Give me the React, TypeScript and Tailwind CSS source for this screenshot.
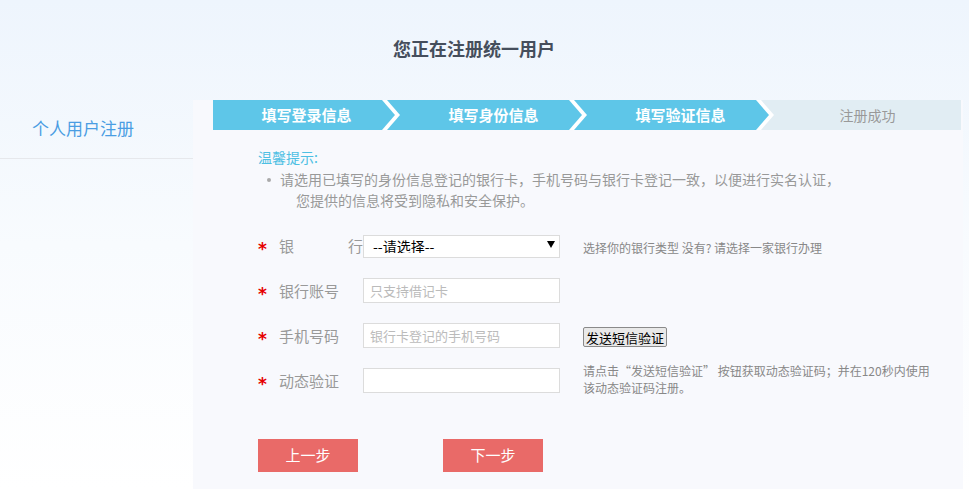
import React from "react";

const FONT = { fontFamily: '"Noto Sans CJK SC", "Noto Sans", sans-serif' };

const steps = [
  { label: "填写登录信息", active: true },
  { label: "填写身份信息", active: true },
  { label: "填写验证信息", active: true },
  { label: "注册成功", active: false },
];

const BLUE = "#5ec6e8";
const GRAY = "#e1edf3";

function Chevron({ cur, next }: { cur: string; next: string }) {
  return (
    <svg
      className="absolute right-0 top-0"
      width="18"
      height="30"
      viewBox="0 0 18 30"
    >
      <rect x="0" y="0" width="18" height="30" fill={next} />
      <polygon points="0,0 5,0 18,15 5,30 0,30" fill="#ffffff" />
      <polygon points="0,0 13,15 0,30" fill={cur} />
    </svg>
  );
}

function Star() {
  return (
    <span
      className="w-[21px] text-[17px] font-bold text-[#e60000] leading-none translate-y-[4px] inline-block"
      style={{ fontFamily: '"DejaVu Sans", sans-serif' }}
    >
      *
    </span>
  );
}

function Row({
  label,
  children,
  hint,
}: {
  label: React.ReactNode;
  children: React.ReactNode;
  hint?: React.ReactNode;
}) {
  return (
    <div className="flex items-center h-[45px]">
      <Star />
      <div className="w-[84px] text-[15px] text-[#999] leading-none">{label}</div>
      <div className="w-[197px] flex items-center">{children}</div>
      <div className="ml-[23px]">{hint}</div>
    </div>
  );
}

export default function App() {
  return (
    <div
      className="w-[969px] h-[489px] overflow-hidden bg-gradient-to-b from-[#eef5fd] via-[#f8fbfe] to-[#ffffff]"
      style={FONT}
    >
      <div className="relative h-[100px] flex justify-center pr-[21px]">
        <h1 className="mt-[37px] text-[18px] font-bold text-[#454e5c] leading-[22px]">
          您正在注册统一用户
        </h1>
      </div>
      <div className="flex">
        <div className="w-[193px] shrink-0">
          <div className="h-[59px] border-b border-[#e6e8ec] flex items-center pl-[32px] pb-[3px] text-[17px] text-[#4a9de3]">
            个人用户注册
          </div>
        </div>
        <div className="w-[770px] h-[389px] bg-[#f8f9fd] pl-[20px]">
          <div className="flex w-[748px] h-[30px]">
            {steps.map((s, i) => {
              const cur = s.active ? BLUE : GRAY;
              const next = i < steps.length - 1 ? (steps[i + 1].active ? BLUE : GRAY) : GRAY;
              return (
                <div
                  key={i}
                  className={`relative w-[187px] h-[30px] flex items-center justify-center ${
                    s.active
                      ? "bg-[#5ec6e8] text-white font-bold text-[15px]"
                      : "bg-[#e1edf3] text-[#999] text-[14px]"
                  }`}
                >
                  {i < steps.length - 1 && <Chevron cur={cur} next={next} />}
                  <span className="relative">{s.label}</span>
                </div>
              );
            })}
          </div>

          <div className="pl-[45px]">
            <div className="mt-[17px] text-[14px] leading-[20px] text-[#4dbfe3]">温馨提示:</div>
            <div className="flex items-start mt-[2px] text-[14px] leading-[21px] text-[#999]">
              <span className="w-[22px] pl-[9px] pt-[9px]">
                <span className="block w-[4px] h-[4px] rounded-full bg-[#aaa]" />
              </span>
              <div>
                请选用已填写的身份信息登记的银行卡，手机号码与银行卡登记一致，以便进行实名认证，
                <div className="pl-[16px]">您提供的信息将受到隐私和安全保护。</div>
              </div>
            </div>

            <div className="mt-[12px]">
              <Row
                label={
                  <div className="flex justify-between w-[84px]">
                    <span>银</span>
                    <span>行</span>
                  </div>
                }
                hint={
                  <span className="text-[12px] text-[#888]">
                    选择你的银行类型 没有? 请选择一家银行办理
                  </span>
                }
              >
                <div className="relative w-[197px] h-[23px] -translate-y-[1px]">
                  <select className="appearance-none w-full h-full bg-white border border-[#dcdcdc] pl-[9px] text-[14px] leading-none text-black outline-none">
                    <option>--请选择--</option>
                  </select>
                  <span className="pointer-events-none absolute right-[5px] top-[8px] w-0 h-0 border-l-[4px] border-r-[4px] border-t-[7px] border-l-transparent border-r-transparent border-t-black" />
                </div>
              </Row>

              <Row label="银行账号">
                <input
                  className="w-[197px] h-[25px] bg-white border border-[#dcdcdc] px-[6px] text-[13px] placeholder:text-[#bbb] outline-none"
                  placeholder="只支持借记卡"
                />
              </Row>

              <Row
                label="手机号码"
                hint={
                  <button className="h-[20px] px-[2px] bg-[#e9e9e9] border border-[#8a8a8a] rounded-[2px] text-[13px] text-black leading-none">
                    发送短信验证
                  </button>
                }
              >
                <input
                  className="w-[197px] h-[25px] bg-white border border-[#dcdcdc] px-[6px] text-[13px] placeholder:text-[#bbb] outline-none"
                  placeholder="银行卡登记的手机号码"
                />
              </Row>

              <Row
                label="动态验证"
                hint={
                  <div className="text-[12px] leading-[17px] text-[#888] mt-[-3px]">
                    <div>请点击“发送短信验证” 按钮获取动态验证码；并在120秒内使用</div>
                    <div>该动态验证码注册。</div>
                  </div>
                }
              >
                <input className="w-[197px] h-[25px] bg-white border border-[#dcdcdc] px-[6px] text-[13px] outline-none" />
              </Row>
            </div>

            <div className="flex gap-[85px] mt-[36px]">
              <button className="w-[100px] h-[33px] bg-[#e96a68] text-white text-[15px]">上一步</button>
              <button className="w-[100px] h-[33px] bg-[#e96a68] text-white text-[15px]">下一步</button>
            </div>
          </div>
        </div>
      </div>
    </div>
  );
}
